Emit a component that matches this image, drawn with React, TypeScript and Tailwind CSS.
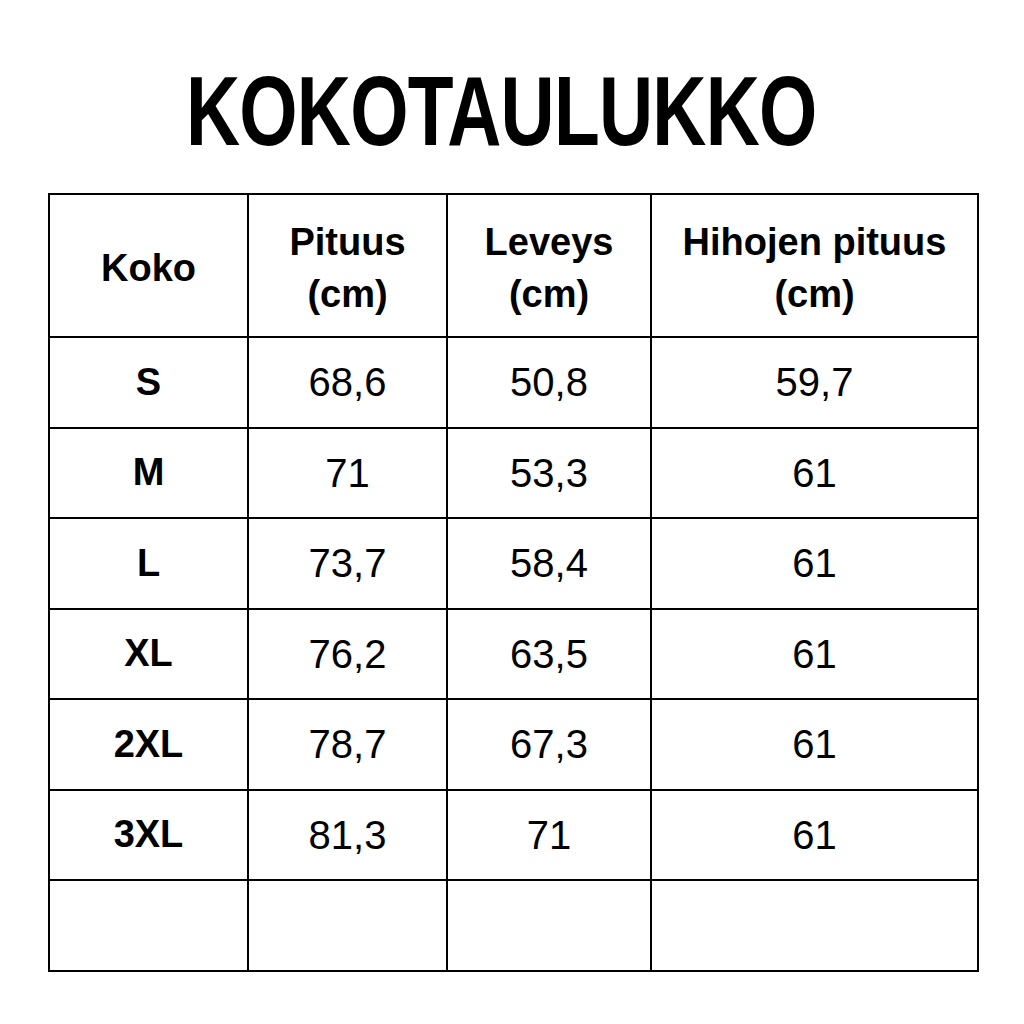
import React from 'react';

const rows = [
  { size: 'S', length: '68,6', width: '50,8', sleeve: '59,7' },
  { size: 'M', length: '71', width: '53,3', sleeve: '61' },
  { size: 'L', length: '73,7', width: '58,4', sleeve: '61' },
  { size: 'XL', length: '76,2', width: '63,5', sleeve: '61' },
  { size: '2XL', length: '78,7', width: '67,3', sleeve: '61' },
  { size: '3XL', length: '81,3', width: '71', sleeve: '61' },
];

export default function App() {
  return (
    <div
      className="w-[1024px] h-[1024px] bg-white text-black overflow-hidden"
      style={{ fontFamily: '"Liberation Sans", Arial, sans-serif' }}
    >
      {/* Title */}
      <div className="pt-[62px] flex justify-center">
        <h1 className="text-[98px] leading-none font-bold scale-x-[0.765] ml-[-22px] tracking-[-1px]">
          KOKOTAULUKKO
        </h1>
      </div>

      {/* Table */}
      <table className="mt-[33px] ml-[48px] w-[929px] border-collapse table-fixed">
        <colgroup>
          <col className="w-[199px]" />
          <col className="w-[199px]" />
          <col className="w-[204px]" />
          <col className="w-[327px]" />
        </colgroup>
        <thead>
          <tr className="h-[143px]">
            <th className="border-2 border-black text-[38px] font-bold leading-[52px] pt-1">Koko</th>
            <th className="border-2 border-black text-[38px] font-bold leading-[52px] pt-1">
              Pituus
              <br />
              (cm)
            </th>
            <th className="border-2 border-black text-[38px] font-bold leading-[52px] pt-1">
              Leveys
              <br />
              (cm)
            </th>
            <th className="border-2 border-black text-[38px] font-bold leading-[52px] pt-1">
              Hihojen pituus
              <br />
              (cm)
            </th>
          </tr>
        </thead>
        <tbody>
          {rows.map((r) => (
            <tr key={r.size} className="h-[90.5px]">
              <td className="border-2 border-black text-center text-[38px] font-bold">{r.size}</td>
              <td className="border-2 border-black text-center text-[40px]">{r.length}</td>
              <td className="border-2 border-black text-center text-[40px]">{r.width}</td>
              <td className="border-2 border-black text-center text-[40px]">{r.sleeve}</td>
            </tr>
          ))}
          <tr className="h-[91px]">
            <td className="border-2 border-black" />
            <td className="border-2 border-black" />
            <td className="border-2 border-black" />
            <td className="border-2 border-black" />
          </tr>
        </tbody>
      </table>
    </div>
  );
}
